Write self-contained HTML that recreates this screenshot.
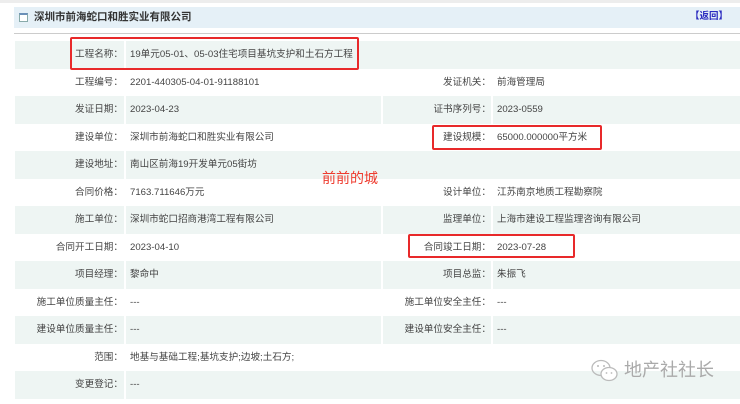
<!DOCTYPE html>
<html><head><meta charset="utf-8"><style>
*{margin:0;padding:0;box-sizing:border-box}
body{width:740px;height:404px;background:#fff;position:relative;overflow:hidden;font-family:"Liberation Sans","Noto Sans CJK SC",sans-serif;font-size:9.6px;color:#444}
.a{position:absolute;white-space:nowrap}
.row{position:absolute;left:15px;width:725px;height:27.5px}
.sh{background:#eef5f3}
.sep{position:absolute;top:0;height:100%;width:2px;background:#fff}
.l{position:absolute;text-align:right;line-height:27.5px;white-space:nowrap}
.v{position:absolute;line-height:27.5px;white-space:nowrap}
.box{position:absolute;border:2px solid #e8292a;border-radius:2px}
</style></head><body>
<div class="a" style="left:0;top:0;width:740px;height:3px;background:#ededed"></div>
<div class="a" style="left:14px;top:7px;width:726px;height:21px;background:#e5f0f7"></div>
<div class="a" style="left:19px;top:13px;width:9px;height:9px;border:1px solid #8aa;background:#fff;border-top:2px solid #6a8fb8"></div>
<div class="a" style="left:34px;top:9px;font-weight:bold;font-size:10.5px;color:#333;line-height:16px">深圳市前海蛇口和胜实业有限公司</div>
<div class="a" style="left:690px;top:9px;font-weight:bold;color:#2b2bc0;font-size:9.5px;line-height:16px">【返回】</div>
<div class="a" style="left:14px;top:33px;width:726px;height:1px;background:#ccc"></div>

<div class="row sh" style="top:41px"><div class="sep" style="left:109px"></div><div class="l" style="left:0;width:108px">工程名称：</div><div class="v" style="left:115px">19单元05-01、05-03住宅项目基坑支护和土石方工程</div></div>
<div class="row" style="top:68.5px"><div class="l" style="left:0;width:108px">工程编号：</div><div class="v" style="left:115px">2201-440305-04-01-91188101</div><div class="l" style="left:367px;width:109px">发证机关：</div><div class="v" style="left:482px">前海管理局</div></div>
<div class="row sh" style="top:96px"><div class="sep" style="left:109px"></div><div class="sep" style="left:366px"></div><div class="sep" style="left:476px"></div><div class="l" style="left:0;width:108px">发证日期：</div><div class="v" style="left:115px">2023-04-23</div><div class="l" style="left:367px;width:109px">证书序列号：</div><div class="v" style="left:482px">2023-0559</div></div>
<div class="row" style="top:123.5px"><div class="l" style="left:0;width:108px">建设单位：</div><div class="v" style="left:115px">深圳市前海蛇口和胜实业有限公司</div><div class="l" style="left:367px;width:109px">建设规模：</div><div class="v" style="left:482px">65000.000000平方米</div></div>
<div class="row sh" style="top:151px"><div class="sep" style="left:109px"></div><div class="l" style="left:0;width:108px">建设地址：</div><div class="v" style="left:115px">南山区前海19开发单元05街坊</div></div>
<div class="row" style="top:178.5px"><div class="l" style="left:0;width:108px">合同价格：</div><div class="v" style="left:115px">7163.711646万元</div><div class="l" style="left:367px;width:109px">设计单位：</div><div class="v" style="left:482px">江苏南京地质工程勘察院</div></div>
<div class="row sh" style="top:206px"><div class="sep" style="left:109px"></div><div class="sep" style="left:366px"></div><div class="sep" style="left:476px"></div><div class="l" style="left:0;width:108px">施工单位：</div><div class="v" style="left:115px">深圳市蛇口招商港湾工程有限公司</div><div class="l" style="left:367px;width:109px">监理单位：</div><div class="v" style="left:482px">上海市建设工程监理咨询有限公司</div></div>
<div class="row" style="top:233.5px"><div class="l" style="left:0;width:108px">合同开工日期：</div><div class="v" style="left:115px">2023-04-10</div><div class="l" style="left:367px;width:109px">合同竣工日期：</div><div class="v" style="left:482px">2023-07-28</div></div>
<div class="row sh" style="top:261px"><div class="sep" style="left:109px"></div><div class="sep" style="left:366px"></div><div class="sep" style="left:476px"></div><div class="l" style="left:0;width:108px">项目经理：</div><div class="v" style="left:115px">黎命中</div><div class="l" style="left:367px;width:109px">项目总监：</div><div class="v" style="left:482px">朱振飞</div></div>
<div class="row" style="top:288.5px"><div class="l" style="left:0;width:108px">施工单位质量主任：</div><div class="v" style="left:115px">---</div><div class="l" style="left:367px;width:109px">施工单位安全主任：</div><div class="v" style="left:482px">---</div></div>
<div class="row sh" style="top:316px"><div class="sep" style="left:109px"></div><div class="sep" style="left:366px"></div><div class="sep" style="left:476px"></div><div class="l" style="left:0;width:108px">建设单位质量主任：</div><div class="v" style="left:115px">---</div><div class="l" style="left:367px;width:109px">建设单位安全主任：</div><div class="v" style="left:482px">---</div></div>
<div class="row" style="top:343.5px"><div class="l" style="left:0;width:108px">范围：</div><div class="v" style="left:115px">地基与基础工程;基坑支护;边坡;土石方;</div></div>
<div class="row sh" style="top:371px"><div class="sep" style="left:109px"></div><div class="l" style="left:0;width:108px">变更登记：</div><div class="v" style="left:115px">---</div></div>

<div class="box" style="left:70px;top:37px;width:289px;height:33px"></div>
<div class="box" style="left:432px;top:125px;width:170px;height:25px"></div>
<div class="box" style="left:408px;top:234px;width:167px;height:24px"></div>
<div class="a" style="left:322px;top:169px;color:#ee3b2e;font-size:14px;line-height:18px">前前的城</div>

<svg class="a" style="left:590px;top:358px" width="30" height="26" viewBox="0 0 30 26"><ellipse cx="11" cy="10" rx="9" ry="7.5" fill="none" stroke="#bbb" stroke-width="1.3"/><ellipse cx="19" cy="16" rx="8" ry="6.5" fill="#fff" stroke="#bbb" stroke-width="1.3"/><circle cx="8" cy="8" r="1" fill="#bbb"/><circle cx="14" cy="8" r="1" fill="#bbb"/><circle cx="16.5" cy="15" r="0.9" fill="#bbb"/><circle cx="21.5" cy="15" r="0.9" fill="#bbb"/></svg>
<div class="a" style="left:624px;top:359px;color:#aaa;font-size:18px;line-height:22px">地产社社长</div>
</body></html>
